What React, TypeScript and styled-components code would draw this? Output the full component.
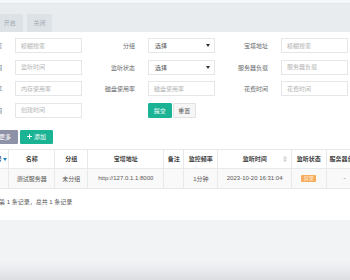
import React from 'react';
import styled, { createGlobalStyle } from 'styled-components';

const GlobalStyle = createGlobalStyle`
  html, body {
    margin: 0;
    padding: 0;
    background: #ffffff;
  }
  body {
    font-family: 'Liberation Sans', 'Noto Sans CJK SC', sans-serif;
    color: #676a6c;
  }
`;

const colors = {
  green: '#1ab394',
  border: '#e5e6e7',
  tableBorder: '#e7eaec',
  label: '#676a6c',
  placeholder: '#b3b3b3',
  warning: '#f8ac59',
};

const Viewport = styled.div`
  width: 350px;
  height: 280px;
  overflow: hidden;
  display: flex;
  flex-direction: column;
  background: #f2f3f5;
`;

const TopStrip = styled.div`
  height: 4px;
  flex-shrink: 0;
  background: #f6f7f8;
  border-bottom: 1px solid #e4e7ea;
  box-sizing: border-box;
`;

/* the page is scrolled sideways, so everything starts left of the window */
const Page = styled.div`
  margin-left: -51px;
  width: 470px;
  display: flex;
  flex-direction: column;
`;

const Toolbar = styled.div`
  height: 28px;
  flex-shrink: 0;
  background: #e9ecef;
  display: flex;
  align-items: flex-end;
  gap: 4px;
  padding-left: 48px;
  box-sizing: border-box;
`;

const ToolButton = styled.div`
  width: 25.6px;
  height: 18.4px;
  background: #dde2e7;
  color: #a3aab1;
  font-size: 6px;
  display: flex;
  align-items: center;
  justify-content: center;
`;

const Content = styled.div`
  height: 188px;
  flex-shrink: 0;
  background: #ffffff;
  padding-top: 6px;
  box-sizing: border-box;
  display: flex;
  flex-direction: column;
`;

const FormGrid = styled.div`
  display: grid;
  grid-template-columns: repeat(3, 66px 67px);
  grid-auto-rows: 15px;
  row-gap: 6.67px;
`;

const Label = styled.div`
  font-size: 6px;
  color: ${colors.label};
  display: flex;
  align-items: center;
  justify-content: flex-end;
  padding-right: 13px;
  white-space: nowrap;
`;

const TextInput = styled.input`
  width: 100%;
  height: 15px;
  box-sizing: border-box;
  border: 1px solid ${colors.border};
  background: #ffffff;
  padding: 0 5px;
  font-family: inherit;
  font-size: 6px;
  color: #555;
  outline: none;
  &::placeholder {
    color: ${colors.placeholder};
  }
`;

const SelectBox = styled.div`
  height: 15px;
  box-sizing: border-box;
  border: 1px solid ${colors.border};
  background: #ffffff;
  padding: 0 4px 0 6px;
  font-size: 6px;
  color: #555;
  display: flex;
  align-items: center;
  justify-content: space-between;
`;

const ButtonPair = styled.div`
  display: flex;
  align-items: stretch;
  gap: 1px;
`;

const Button = styled.div<{ $variant: 'primary' | 'default' | 'muted' }>`
  height: 100%;
  box-sizing: border-box;
  padding: 0 6px;
  font-size: 6px;
  display: flex;
  align-items: center;
  justify-content: center;
  gap: 2px;
  border-radius: 1px;
  white-space: nowrap;
  ${({ $variant }) =>
    $variant === 'primary'
      ? `background: ${colors.green}; color: #fff; border: 1px solid ${colors.green};`
      : $variant === 'muted'
      ? `background: #8e92a8; color: #fff; border: 1px solid #8e92a8;`
      : `background: #f6f6f6; color: #555; border: 1px solid #e2e2e2;`}
`;

const SubmitButton = styled(Button)`
  width: 23.5px;
`;

const ActionsRow = styled.div`
  height: 14px;
  margin-top: 12px;
  padding-left: 43px;
  display: flex;
  gap: 2px;
`;

const Table = styled.table`
  margin-top: 5px;
  margin-left: 21px;
  border-collapse: collapse;
  table-layout: fixed;
  width: 392.3px;
`;

const Th = styled.th`
  position: relative;
  height: 18px;
  padding: 0 1px;
  border: 1px solid ${colors.tableBorder};
  font-size: 6px;
  font-weight: bold;
  color: #444;
  text-align: center;
  white-space: nowrap;
  overflow: hidden;
  background: #ffffff;
`;

const FirstTh = styled(Th)`
  text-align: right;
  padding-right: 1px;
`;

const Td = styled.td`
  height: 19px;
  padding: 0 1px;
  border: 1px solid ${colors.tableBorder};
  font-size: 6px;
  color: #555;
  text-align: center;
  white-space: nowrap;
  overflow: hidden;
  background: #f9f9f9;
`;

const SortIcon = styled.span`
  position: absolute;
  right: 4px;
  top: 50%;
  transform: translateY(-50%);
  display: flex;
`;

const Badge = styled.span`
  display: inline-block;
  background: ${colors.warning};
  color: #fff;
  font-size: 5px;
  line-height: 7px;
  padding: 0 2.5px;
  border-radius: 1px;
`;

const Footer = styled.div`
  margin-top: 8px;
  padding-left: 50px;
  font-size: 6px;
  line-height: 10px;
  color: #555;
  white-space: nowrap;
`;

const BottomArea = styled.div`
  flex: 1;
  background: linear-gradient(to bottom, #f2f3f5 0%, #f2f3f5 68%, #e9eaed 85%, #dcdde0 100%);
`;

const Caret = ({ color = '#333' }: { color?: string }) => (
  <svg width="4" height="3" viewBox="0 0 4 3">
    <path d="M0 0 L4 0 L2 3 Z" fill={color} />
  </svg>
);

const SortArrows = () => (
  <svg width="4" height="7" viewBox="0 0 4 7">
    <path d="M0 3 L2 0.5 L4 3 Z" fill="#c8cbd0" />
    <path d="M0 4 L2 6.5 L4 4 Z" fill="#c8cbd0" />
  </svg>
);

const PlusIcon = () => (
  <svg width="5" height="5" viewBox="0 0 5 5">
    <path d="M2 0 H3 V2 H5 V3 H3 V5 H2 V3 H0 V2 H2 Z" fill="#fff" />
  </svg>
);

const columns = [38.3, 46, 33, 76, 20, 34, 73.7, 34.7, 36.6];

const App = () => (
  <>
    <GlobalStyle />
    <Viewport>
      <TopStrip />
      <Page>
        <Toolbar>
          <ToolButton>开启</ToolButton>
          <ToolButton>关闭</ToolButton>
        </Toolbar>
        <Content>
          <FormGrid>
            <Label>模糊搜索</Label>
            <TextInput placeholder="模糊搜索" />
            <Label>分组</Label>
            <SelectBox>
              选择
              <Caret />
            </SelectBox>
            <Label>宝塔地址</Label>
            <TextInput placeholder="模糊搜索" />

            <Label>监听时间</Label>
            <TextInput placeholder="监听时间" />
            <Label>监听状态</Label>
            <SelectBox>
              选择
              <Caret />
            </SelectBox>
            <Label>服务器负载</Label>
            <TextInput placeholder="服务器负载" />

            <Label>内存使用率</Label>
            <TextInput placeholder="内存使用率" />
            <Label>磁盘使用率</Label>
            <TextInput placeholder="磁盘使用率" />
            <Label>花费时间</Label>
            <TextInput placeholder="花费时间" />

            <Label>创建时间</Label>
            <TextInput placeholder="创建时间" />
            <Label />
            <ButtonPair>
              <SubmitButton $variant="primary">提交</SubmitButton>
              <SubmitButton $variant="default">重置</SubmitButton>
            </ButtonPair>
          </FormGrid>

          <ActionsRow>
            <Button $variant="muted">更多</Button>
            <Button $variant="primary">
              <PlusIcon />
              添加
            </Button>
          </ActionsRow>

          <Table>
            <colgroup>
              {columns.map((w, i) => (
                <col key={i} style={{ width: `${w}px` }} />
              ))}
            </colgroup>
            <thead>
              <tr>
                <FirstTh>
                  序号 <Caret color="#1c84c6" />
                </FirstTh>
                <Th>名称</Th>
                <Th>分组</Th>
                <Th>宝塔地址</Th>
                <Th>备注</Th>
                <Th>监控频率</Th>
                <Th>
                  监听时间
                  <SortIcon>
                    <SortArrows />
                  </SortIcon>
                </Th>
                <Th>监听状态</Th>
                <Th>服务器负载</Th>
              </tr>
            </thead>
            <tbody>
              <tr>
                <Td />
                <Td>测试服务器</Td>
                <Td>未分组</Td>
                <Td>http://127.0.1.1:8000</Td>
                <Td />
                <Td>1分钟</Td>
                <Td>2023-10-20 16:31:04</Td>
                <Td>
                  <Badge>异常</Badge>
                </Td>
                <Td>-</Td>
              </tr>
            </tbody>
          </Table>

          <Footer>第 1 条记录，总共 1 条记录</Footer>
        </Content>
      </Page>
      <BottomArea />
    </Viewport>
  </>
);

export default App;
